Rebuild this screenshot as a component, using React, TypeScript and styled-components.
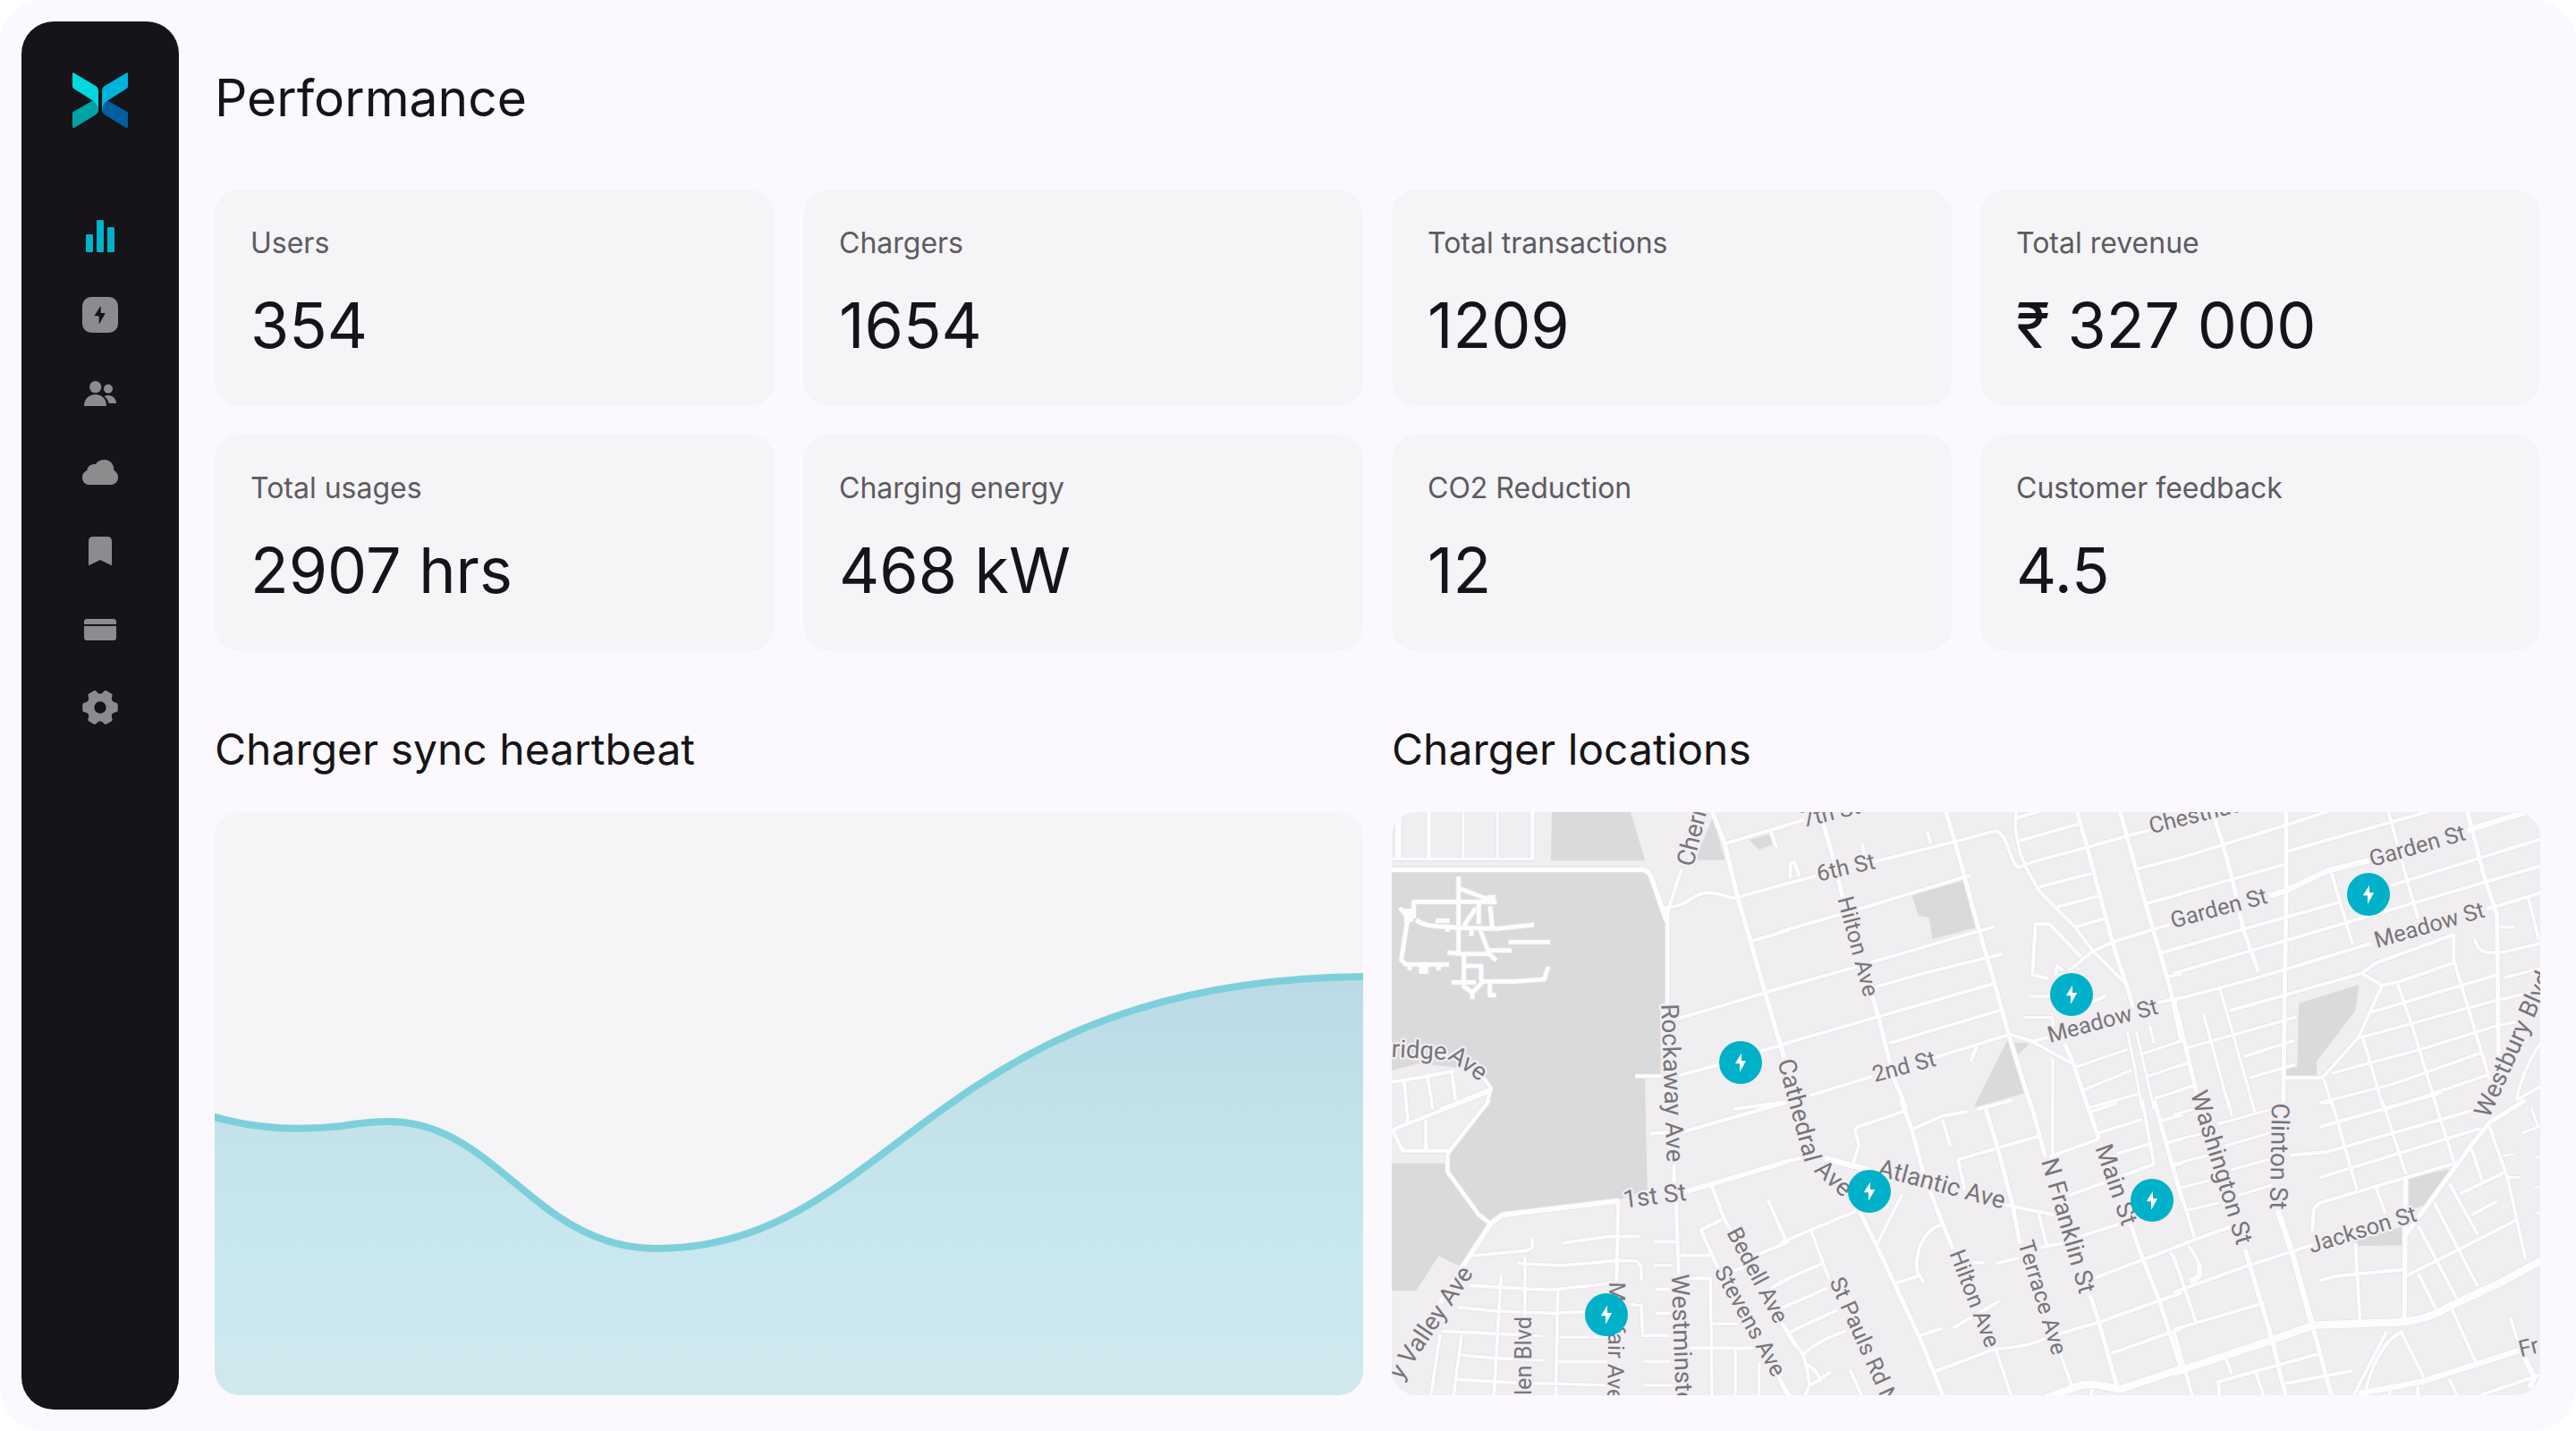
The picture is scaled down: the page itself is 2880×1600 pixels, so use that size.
import React from "react";
import styled, { createGlobalStyle } from "styled-components";

const GlobalStyle = createGlobalStyle`
  *, *::before, *::after { box-sizing: border-box; }
  body { margin: 0; background: #ffffff; }
`;

const color = {
  page: "#fbf9fd",
  card: "#f5f4f7",
  ink: "#161418",
  label: "#5d5b5f",
  accent: "#00b1c9",
  icon: "#8e8b8f",
};

const Page = styled.div`
  display: flex;
  gap: 40px;
  min-height: 100vh;
  padding: 24px 40px 24px 24px;
  border-radius: 48px;
  background: ${color.page};
  color: ${color.ink};
  font-family: Inter, "Liberation Sans", sans-serif;
`;

const Sidebar = styled.aside`
  display: flex;
  flex: none;
  flex-direction: column;
  align-items: center;
  gap: 96px;
  width: 176px;
  padding-top: 56px;
  border-radius: 36px;
  background: ${color.ink};
`;

const Logo = styled.svg`
  display: block;
  width: 64px;
  height: 64px;
`;

const Nav = styled.nav`
  display: flex;
  flex-direction: column;
  gap: 40px;
`;

const NavButton = styled.button<{ $active?: boolean }>`
  display: block;
  width: 48px;
  height: 48px;
  padding: 0;
  border: 0;
  background: none;
  color: ${(p) => (p.$active ? color.accent : color.icon)};
  cursor: pointer;
`;

const NavIcon = styled.svg`
  display: block;
  width: 100%;
  height: 100%;
  fill: currentColor;
`;

const Main = styled.main`
  display: flex;
  flex: 1;
  flex-direction: column;
  min-width: 0;
  padding: 54px 0 16px;
`;

const Title = styled.h1`
  margin: 0 0 70px;
  font-size: 57px;
  font-weight: 400;
  line-height: 64px;
`;

const Stats = styled.dl`
  display: grid;
  grid-template-columns: repeat(4, 1fr);
  gap: 32px;
  margin: 0 0 82px;
`;

const StatCard = styled.div`
  display: flex;
  flex-direction: column;
  gap: 32px;
  padding: 40px 40px 50px;
  border-radius: 28px;
  background: ${color.card};
`;

const StatLabel = styled.dt`
  color: ${color.label};
  font-size: 32px;
  font-weight: 400;
  line-height: 40px;
`;

const StatValue = styled.dd`
  margin: 0;
  font-size: 70px;
  font-weight: 400;
  line-height: 80px;
`;

const Panels = styled.div`
  display: grid;
  grid-template-columns: repeat(2, 1fr);
  gap: 32px;
`;

const Panel = styled.section`
  display: flex;
  flex-direction: column;
  gap: 42px;
  min-width: 0;
`;

const PanelTitle = styled.h2`
  margin: 0;
  font-size: 48px;
  font-weight: 400;
  line-height: 56px;
`;

const PanelBody = styled.div`
  position: relative;
  overflow: hidden;
  aspect-ratio: 1284 / 652;
  border-radius: 28px;
  background: ${color.card};
`;

const Drawing = styled.svg`
  display: block;
  width: 100%;
  height: 100%;
`;

const Pin = styled.button<{ $x: number; $y: number }>`
  position: absolute;
  left: ${(p) => (p.$x / 1284) * 100}%;
  top: ${(p) => (p.$y / 652) * 100}%;
  display: grid;
  place-items: center;
  width: 48px;
  height: 48px;
  padding: 0;
  border: 0;
  border-radius: 50%;
  background: ${color.accent};
  transform: translate(-50%, -50%);
  cursor: pointer;
`;

const PinBolt = styled.svg`
  display: block;
  width: 12px;
  height: 20px;
  fill: #ffffff;
`;

const BOLT = "M21 1 Q21 0 20 1 L1 31 Q0 34 3 34 H15 V59 Q16 61 17 59 L35 27 Q37 24 34 24 H21 Z";

/* Six rounded teeth around a centre hole. */
const gearPath = (() => {
  const at = (deg: number, r: number) => {
    const a = (deg * Math.PI) / 180;
    return `${(72 + r * Math.cos(a)).toFixed(1)} ${(69 + r * Math.sin(a)).toFixed(1)}`;
  };
  let d = "";
  for (let i = 0; i < 6; i++) {
    const a = i * 60;
    d += `${i ? "L" : "M"}${at(a - 17, 55)} Q${at(a - 15, 60)} ${at(a - 10, 60)} L${at(a + 10, 60)} Q${at(a + 15, 60)} ${at(a + 17, 55)} Q${at(a + 30, 38)} ${at(a + 43, 55)}`;
  }
  return d + "Z M92 69 A20 20 0 1 0 52 69 A20 20 0 1 0 92 69Z";
})();

const navItems: { name: string; art: React.ReactNode }[] = [
  {
    name: "Performance",
    art: (
      <>
        <rect x="24" y="66" width="24" height="60" rx="4" />
        <rect x="60" y="18" width="24" height="108" rx="4" />
        <rect x="96" y="42" width="24" height="84" rx="4" />
      </>
    ),
  },
  {
    name: "Chargers",
    art: (
      <>
        <rect x="12" y="12" width="120" height="120" rx="30" />
        <path d={BOLT} transform="translate(53 42)" fill={color.ink} />
      </>
    ),
  },
  {
    name: "Users",
    art: (
      <>
        <circle cx="56" cy="50" r="20" />
        <circle cx="99" cy="56" r="15" />
        <path d="M18 114 C18 90 35 75 56 75 S93 90 93 114Z" />
        <path d="M86 82 Q92 78 99 78 C115 78 126 90 126 105 H101 C99 96 94 88 86 82Z" />
      </>
    ),
  },
  {
    name: "Cloud",
    art: (
      <path d="M38 114 C21 114 12 103 12 89 C12 79 18 70 28 66 C29 52 42 44 57 45 C63 35 74 30 86 30 C106 30 119 46 118 65 C127 70 132 79 132 89 C132 103 121 114 106 114Z" />
    ),
  },
  {
    name: "Bookmarks",
    art: <path d="M33 40 Q33 24 49 24 H95 Q111 24 111 40 V117 Q111 121 107 119 L72 102 L37 119 Q33 121 33 117Z" />,
  },
  {
    name: "Payments",
    art: (
      <>
        <path d="M18 54 V46 Q18 36 28 36 H116 Q126 36 126 46 V54Z" />
        <path d="M18 60 H126 V98 Q126 108 116 108 H28 Q18 108 18 98Z" />
      </>
    ),
  },
  { name: "Settings", art: <path d={gearPath} fillRule="evenodd" /> },
];

const stats = [
  ["Users", "354"],
  ["Chargers", "1654"],
  ["Total transactions", "1209"],
  ["Total revenue", "₹ 327 000"],
  ["Total usages", "2907 hrs"],
  ["Charging energy", "468 kW"],
  ["CO2 Reduction", "12"],
  ["Customer feedback", "4.5"],
];

const CURVE = "M-10 338 C40 354 90 357 142 351 C160 348 178 346 195 346 C315 346 358 488 494 488 C760 488 800 184 1294 184";

type Road = [number, string];
type Label = [name: string, x: number, y: number, angle: number, avenue?: boolean];
type District = { x: number; y: number; parks: string; roads: Road[]; labels: Label[] };

/* The map is split in six districts; each keeps its own origin. */
const districts: District[] = [
  {
    x: -18,
    y: -24,
    parks:
      "M555 0H812L868 187H552Z M18 222H860Q880 225 890 250L935 370L940 660L920 670V910H867L875 1290L770 1328L390 1375L350 1405L300 1375L205 1230V1170L330 1000L352 950L320 905Q290 880 230 880L110 868L18 890Z M1095 40L1135 185H1035Z M1218 118L1285 98L1300 132L1250 150Z",
    roads: [
      [16, "M0 217H860Q880 220 888 240L940 390 M1092 20L1135 130L1178 310L1222 460L1270 630L1335 850"],
      [20, "M40 0V180"],
      [14, "M143 0V180 M490 0V180 M943 345V700"],
      [9, "M258 0V180 M373 0V180 M0 181H495"],
      [
        12,
        "M990 215L945 350 M930 345C1020 340 1020 298 1075 295S1140 315 1170 312L1350 262 M1135 130L1350 66 M1290 90L1308 145 M1222 457L1350 420 M975 718L1270 630L1350 606 M835 910H930 M980 908L1120 870 M1255 825L1350 800 M1165 1020L1350 995",
      ],
      [
        14,
        "M242 240V500 M245 280L350 320 M92 380V325H370 M45 345L75 380 M70 390L50 520L65 535H210 M100 385C130 410 160 405 240 412L370 415L495 402 M410 460H550 M205 495L260 500H345L368 522 M345 488H420 M310 330V400 M300 345L260 405 M348 340L355 410 M315 420L345 500 M260 500V595 M265 540H318V590 M218 595H300 M255 605L288 630L325 592L430 592L530 585L543 542 M288 630V652 M347 595V638H368 M165 388H212 M78 535V555 M175 535V555 M205 410V425 M285 415V440",
      ],
      [30, "M338 318H366 M75 348V392 M125 538V566"],
      [12, "M0 932L110 915L230 892 M60 925L72 1065 M138 910L155 1020 M220 900L232 990 M325 915L350 950L335 1010 M345 955L180 1020"],
    ],
    labels: [
      ["Cherry St", 1028, 210, -76, true],
      ["Rockaway Ave", 922, 668, 88, true],
      ["ridge", 16, 845, 3, true],
      ["Ave", 203, 850, 35, true],
      ["Cathedral", 1312, 860, 75, true],
    ],
  },
  {
    x: 1302,
    y: -24,
    parks: "M442 303L612 255L662 410L512 450L500 378L465 372Z M760 795L838 800L795 840L825 965L650 1015Z",
    roads: [
      [
        15,
        "M145 60L185 200L210 310 M310 640L330 710L360 830L385 925L425 1020 M550 0L600 170L665 410L720 600L770 780L845 1020 M990 0L1030 140L1075 310L1110 440L1130 510L1165 610L1185 680 M1135 0L1165 110L1220 310L1270 480L1310 620L1345 790 M955 800L985 870L1035 1020",
      ],
      [
        12,
        "M0 75L80 50 M0 270L120 238 M310 192L580 125L720 88Q745 90 760 130L785 195L800 210L850 190L1020 145L1160 105L1240 85 M35 245L35 195L50 192L65 240 M275 130L285 170 M495 90L505 130 M0 425L280 345L640 235 M0 615L250 545L660 425L718 410 M320 610L480 565L745 500 M0 805L330 710L715 600 M365 800L740 688 M510 850L770 770 M100 975L310 910 M660 810L640 860 M770 770L840 790L985 870 M835 795L900 780",
      ],
      [
        12,
        "M800 0Q785 50 790 80L805 160L825 210L870 290L990 410L1050 490L1165 605 M790 45L880 18 M805 120L1000 65 M870 275L1045 230 M920 345L1070 305 M990 410L1095 380 M970 555L1050 490L1115 460L1245 420L1310 400 M1200 215L1350 175 M1230 330L1350 298 M1280 495L1350 475 M1300 577L1350 565 M1260 665L1350 645 M1010 510L905 400H857L847 570L900 582 M925 570L930 540L950 555 M1035 665L1095 640",
      ],
      [
        10,
        "M835 642H915 M820 713H915V790 M915 850V1020 M990 880L1165 820 M1020 955L1180 890 M1040 1015L1200 970 M1165 760L1190 880L1215 1020 M1195 760L1225 890L1255 1020 M1240 740L1255 800 M1215 835L1350 790 M1235 910L1350 870 M1255 985L1350 955 M0 780L10 850",
      ],
    ],
    labels: [
      ["7th St", 80, 75, -14],
      ["6th St", 130, 257, -13],
      ["Hilton Ave", 193, 315, 75],
      ["2nd St", 318, 930, -15],
      ["Meadow St", 905, 798, -15],
      ["Chestnut St", 1245, 97, -14],
    ],
  },
  {
    x: 2622,
    y: -24,
    parks: "M420 665L622 603L610 690L480 860V912H375V880H415Z",
    roads: [
      [15, "M130 20L165 130L200 260L235 420L285 560 M980 0L1045 250L1085 370L1090 850 M2 655L45 830L85 1000"],
      [20, "M320 305L370 290L520 220L660 185 M985 85L1180 25"],
      [15, "M378 0V280L368 1000"],
      [
        12,
        "M0 185L370 70L530 18 M385 155L870 18 M0 305L370 200 M720 20L780 240L820 380 M730 270L1240 112 M240 415L560 325 M0 485L240 415 M0 565L580 395L1240 202 M0 655L280 580L660 465 M1050 350L1240 292 M190 690L630 565L680 530L940 435V520L1060 920 M530 230L600 465 M630 565L700 605L750 595L940 530 M700 605L620 780L500 915H370 M665 695L1085 570 M750 595L800 740L885 1020 M635 780L705 1020",
      ],
      [
        11,
        "M620 782L1085 655L1240 618 M530 900L830 820L1085 740L1170 725 M490 1000L740 935L1035 830 M700 1025L1055 905 M1095 410H1145 M1010 450Q1020 490 1050 495H1100L1240 462 M1110 580L1240 545 M1190 310L1225 450 M155 615L200 770L270 1020 M45 815L410 712 M235 845L405 790 M255 915L410 870 M100 700L125 790L188 1020 M0 882L50 865 M0 965L70 940 M505 920L535 1020 M1240 790Q1180 860 1150 990 M1150 990L1240 940 M0 800L30 790",
      ],
    ],
    labels: [
      ["Garden St", -2, 414, -15],
      ["Garden St", 665, 208, -16],
      ["Meadow St", 682, 480, -16],
      ["Westbury Blvd", 1058, 1054, -66, true],
    ],
  },
  {
    x: -18,
    y: 966,
    parks: "M0 212H200L215 240L300 380L350 410L275 540L240 555L175 522L100 640H0Z",
    roads: [
      [17, "M780 338L390 385L350 415L255 560L180 680 M1000 308L1090 282L1350 205"],
      [
        13,
        "M350 -30L30 95L22 105L55 170H205 M133 65V170 M345 0L205 180V240L310 385L350 415 M885 112L1000 105L1350 5 M965 215V300 M972 340L980 590 M778 340L772 610 M1090 285L1130 390L1160 450 M1125 400L1055 435L1115 570",
      ],
      [
        11,
        "M590 480L740 458L850 457 M900 475H975 M980 520H1090 M900 555H960 M1000 598H1090 M905 635H960 M905 715H960 M290 522L470 505L490 495V465 M440 548L590 555L770 538L840 540L855 560V605 M280 622L380 628L550 637L745 615 M465 525V730 M385 585L360 1000 M240 695L370 708L560 715L700 708 M575 640L568 1000 M185 775L400 785L525 792 M180 785L148 1000 M252 787L225 1000 M245 855L360 865L525 873 M235 937L400 947L740 957 M580 795H740 M575 877H740 M820 685L855 690L860 790H950 M865 877H950 M865 957H960 M1087 600L1092 1000 M1095 750H1180 M1015 832H1230 M1170 832V1000 M1250 880V1000",
      ],
      [12, "M1280 335L1340 470 M1240 520L1350 475 M1290 630L1350 600 M1310 700L1350 688 M1325 750L1375 830 M1310 920L1360 1000 M1160 575L1200 560"],
    ],
    labels: [
      ["1st St", 797, 362, -7, true],
      ["Bedell Ave", 1140, 444, 62],
      ["Stevens Ave", 1098, 574, 61],
      ["Westminster", 956, 584, 88, true],
      ["Mayfair Ave", 748, 610, 91],
      ["Glen Blvd", 486, 1042, -90],
      ["y Valley Ave", 50, 942, -56, true],
    ],
  },
  {
    x: 1302,
    y: 966,
    parks: "",
    roads: [
      [15, "M405 0L440 90L480 240L520 350L580 500 M838 0L890 190 M265 370L325 490L470 800L550 1000 M690 30L730 160L780 350L805 480 M1255 0L1350 340 M1025 0L1070 130 M1175 415L1220 540L1275 680L1345 900 M1040 655L1070 745L1130 960"],
      [20, "M150 195L300 235"],
      [26, "M880 1005L985 965Q1020 950 1060 955L1140 970L1350 900"],
      [
        12,
        "M415 38L260 90L250 100L265 150L245 215 M440 100L540 55L630 38 M545 65L572 155 M665 30L780 0 M0 210L80 192 M620 300L597 200L870 120 M915 0V190 M905 190L1070 130 M750 350L920 385 M868 380L895 490 M870 495L950 480 M725 548L800 530 M1000 460L1140 415 M970 320L1255 215L1215 0 M1040 40L1130 10 M1070 110L1215 65 M1130 180L1245 145 M1275 70L1350 50 M1290 145L1350 130 M1320 220L1350 210 M1060 595L1350 485 M1310 510L1350 600",
      ],
      [
        12,
        "M0 480L105 435L260 370 M0 425L20 470 M105 440L165 600 M410 315L325 485 M545 420C490 420 440 520 465 590L385 615 M465 580L482 612 M650 545H685 M470 790L545 765 M580 765L735 675 M520 910L720 835C800 830 850 820 900 795L1070 745L1350 645 M725 840L778 1000 M940 850L980 960 M1110 850L1350 765 M0 610L150 545 M0 700L160 630 M30 780L190 705 M80 850Q140 800 220 775 M0 735L80 860L90 900L100 955L80 1000 M85 885Q130 905 135 945 M105 955L170 912 M0 940L30 1000 M235 905L278 1000 M1045 970V1000",
      ],
    ],
    labels: [
      ["Ave", 112, 238, 42, true],
      ["Atlantic Ave", 324, 252, 15, true],
      ["St Pauls Rd N", 165, 608, 66],
      ["Hilton Ave", 568, 514, 69],
      ["Terrace Ave", 798, 480, 73],
      ["N Franklin St", 876, 204, 74, true],
      ["Main St", 1057, 160, 71, true],
    ],
  },
  {
    x: 2622,
    y: 966,
    parks: "M790 260L938 230L860 345L790 370Z M610 490V470L765 425V487Z",
    roads: [
      [26, "M0 915L330 805L470 755L750 745Q850 740 930 690L1100 610L1240 535"],
      [20, "M350 370L400 520L470 770 M620 985L830 945L1160 840 M1165 840L1210 930L1195 965"],
      [16, "M470 770L532 1000 M1180 0L1060 75L1000 150L780 450 M778 265L775 730 M240 500L330 800L378 1000"],
      [
        12,
        "M530 0L615 300 M700 0L780 250 M875 0L945 220 M490 90L900 -25 M390 185L510 175L1020 30 M490 260L1030 95 M465 440L470 370Q475 350 500 342L780 260L935 215 M1060 90L1120 260L1180 530 M1000 165L1035 270 M960 315L1115 240 M925 280L1020 450 M1000 385L1085 340 M875 345L1020 625 M820 420L950 665 M780 590L880 540L1155 400 M820 580L880 700 M610 480L625 740 M490 605L550 590L775 568 M680 295L710 380",
      ],
      [
        12,
        "M0 495L190 425 M0 645L250 555L470 485 M0 230L70 460 M0 520L75 745 M50 490Q70 510 85 550 M0 770L305 680 M0 770L40 910L65 1000 M175 865L195 920 M155 1000L150 945L490 850 M275 910L305 1000 M375 950L600 908 M600 1000L715 775 M645 970C670 880 710 800 770 775 M765 780L840 930 M935 705L1015 880 M925 935L955 1000 M1130 730L1165 840 M1030 990L1240 918 M725 975V1000 M820 960V1000",
      ],
      [20, "M85 550Q100 600 55 605"],
      [
        10,
        "M0 50L70 30 M150 80L330 30 M0 135L100 112 M170 155L330 108 M0 215L120 185 M190 235L330 196 M20 295L120 270 M215 320L330 285 M45 370L150 345 M185 0L195 55 M262 0L272 40 M490 10H530 M1105 187L1140 182 M1120 260H1160 M1170 110L1225 90 M1200 25L1225 95 M1215 190H1240 M1212 292H1240 M1218 380H1240",
      ],
    ],
    labels: [
      ["Washington St", 56, -22, 73, true],
      ["Clinton St", 330, 10, 91, true],
      ["Jackson St", 462, 514, -17],
      ["Fr", 1165, 862, -14],
    ],
  },
];

const RoadPath = styled.path`
  fill: none;
  stroke: #fdfcfe;
  stroke-linejoin: round;
`;

const RoadEdge = styled(RoadPath)`
  stroke: #e6e4e8;
`;

const StreetName = styled.text<{ $avenue?: boolean }>`
  fill: #78757a;
  stroke: #f0eef1;
  stroke-width: 14px;
  stroke-linejoin: round;
  paint-order: stroke;
  font-family: Roboto, "Liberation Sans", sans-serif;
  font-size: ${(p) => (p.$avenue ? 83 : 76)}px;
  font-weight: 400;
`;

const pins = [
  { x: 390, y: 280, place: "Rockaway Ave" },
  { x: 760, y: 204, place: "Meadow St" },
  { x: 1092, y: 92, place: "Garden St" },
  { x: 240, y: 562, place: "Mayfair Ave" },
  { x: 534, y: 424, place: "Atlantic Ave" },
  { x: 850, y: 434, place: "Main St" },
];

function BrandLogo() {
  return (
    <Logo viewBox="240 240 192 192" role="img" aria-label="Home">
      <path d="M243 380 Q243 376 247 374 L309 338 L330 345 V371 Q330 379 322 384 L250 428 Q243 431 243 424Z" fill="#00a3a3" />
      <path d="M429 380 Q429 376 425 374 L363 338 L342 345 V371 Q342 379 350 384 L422 428 Q429 431 429 424Z" fill="#00609f" />
      <path d="M243 248 Q243 242 249 245 L322 289 Q330 294 330 303 V372 Q330 350 310 337 L247 297 Q243 294 243 290Z" fill="#00d8e0" />
      <path d="M429 248 Q429 242 423 245 L350 289 Q342 294 342 303 V372 Q342 350 362 337 L425 297 Q429 294 429 290Z" fill="#00b2da" />
    </Logo>
  );
}

function HeartbeatChart() {
  return (
    <Drawing viewBox="0 0 1284 652" preserveAspectRatio="none" role="img" aria-label="Charger sync heartbeat over time">
      <defs>
        <linearGradient id="heartbeat" gradientUnits="userSpaceOnUse" x1="0" y1="184" x2="0" y2="652">
          <stop offset="0" stopColor="#badbe5" />
          <stop offset="0.4" stopColor="#c4e4ea" />
          <stop offset="0.7" stopColor="#cae8ef" />
          <stop offset="1" stopColor="#d0e8ee" />
        </linearGradient>
      </defs>
      <path d={`${CURVE} V660 H-10Z`} fill="url(#heartbeat)" />
      <path d={CURVE} fill="none" stroke="#7dd0db" strokeWidth="8" />
    </Drawing>
  );
}

function StreetMap() {
  return (
    <Drawing viewBox="0 0 3852 1956" preserveAspectRatio="xMidYMid slice">
      <rect width="3852" height="1956" fill="#f0eef1" />
      {districts.map((d, i) => (
        <path key={i} d={d.parks} transform={`translate(${d.x} ${d.y})`} fill="#dad9db" />
      ))}
      {districts.map((d, i) => (
        <g key={i} transform={`translate(${d.x} ${d.y})`}>
          {d.roads.map(([w, path], n) => (
            <RoadEdge key={n} d={path} strokeWidth={w + 5} />
          ))}
        </g>
      ))}
      {districts.map((d, i) => (
        <g key={i} transform={`translate(${d.x} ${d.y})`}>
          {d.roads.map(([w, path], n) => (
            <RoadPath key={n} d={path} strokeWidth={w} />
          ))}
        </g>
      ))}
      {districts.map((d, i) => (
        <g key={i} transform={`translate(${d.x} ${d.y})`}>
          {d.labels.map(([name, x, y, angle, avenue], n) => (
            <StreetName key={n} $avenue={avenue} transform={`translate(${x} ${y}) rotate(${angle})`}>
              {name}
            </StreetName>
          ))}
        </g>
      ))}
    </Drawing>
  );
}

export default function App() {
  return (
    <>
      <GlobalStyle />
      <Page>
        <Sidebar>
          <BrandLogo />
          <Nav aria-label="Main">
            {navItems.map((item, i) => (
              <NavButton key={item.name} type="button" $active={i === 0} aria-label={item.name}>
                <NavIcon viewBox="0 0 144 144" aria-hidden="true">
                  {item.art}
                </NavIcon>
              </NavButton>
            ))}
          </Nav>
        </Sidebar>
        <Main>
          <Title>Performance</Title>
          <Stats>
            {stats.map(([label, value]) => (
              <StatCard key={label}>
                <StatLabel>{label}</StatLabel>
                <StatValue>{value}</StatValue>
              </StatCard>
            ))}
          </Stats>
          <Panels>
            <Panel>
              <PanelTitle>Charger sync heartbeat</PanelTitle>
              <PanelBody>
                <HeartbeatChart />
              </PanelBody>
            </Panel>
            <Panel>
              <PanelTitle>Charger locations</PanelTitle>
              <PanelBody>
                <StreetMap />
                {pins.map((pin) => (
                  <Pin key={pin.place} type="button" $x={pin.x} $y={pin.y} aria-label={`Charger at ${pin.place}`}>
                    <PinBolt viewBox="0 0 36 60" aria-hidden="true">
                      <path d={BOLT} />
                    </PinBolt>
                  </Pin>
                ))}
              </PanelBody>
            </Panel>
          </Panels>
        </Main>
      </Page>
    </>
  );
}
